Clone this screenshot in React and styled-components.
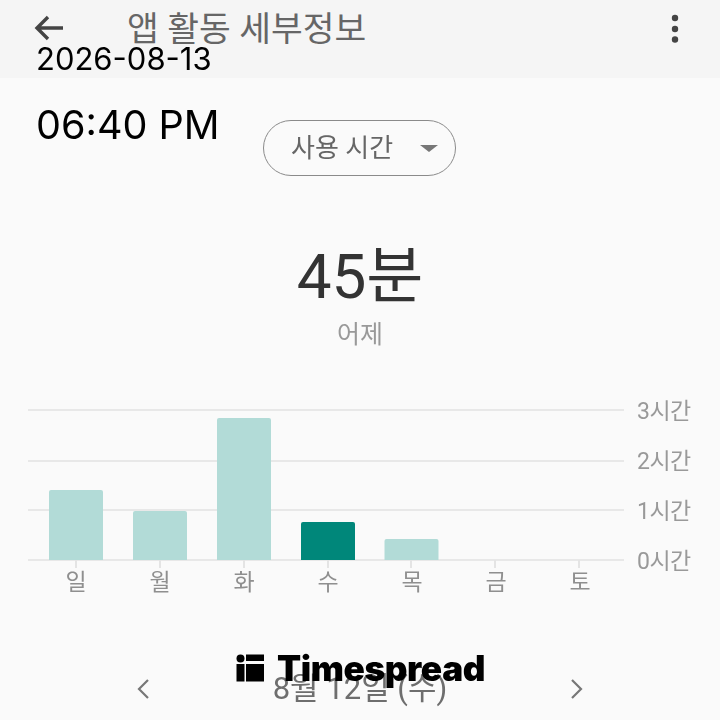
import styled, { createGlobalStyle } from "styled-components";

const GlobalStyle = createGlobalStyle`
  html, body {
    margin: 0;
    padding: 0;
    width: 720px;
    height: 720px;
    overflow: hidden;
    background: #fafafa;
  }
`;

const Page = styled.div`
  position: relative;
  width: 720px;
  height: 720px;
  overflow: hidden;
  background: #fafafa;
  font-family: Roboto, "Noto Sans CJK KR", sans-serif;
`;
const Blurred = styled.div`
  display: flex;
  flex-direction: column;
  height: 100%;
  filter: blur(0.6px);
`;
const Header = styled.header`
  display: flex;
  align-items: flex-start;
  height: 78px;
  flex-shrink: 0;
  padding: 8px 40px 0 34px;
  box-sizing: border-box;
  background: #f5f5f5;
`;
const Title = styled.h1`
  flex: 1;
  margin: 1px 0 0 63px;
  font-size: 34.5px;
  line-height: 40px;
  font-weight: 400;
  color: #666;
`;
const HeaderIcon = styled.svg`
  display: block;
  margin-top: 5px;
`;
const FilterRow = styled.div`
  display: flex;
  padding: 42px 0 0 263px;
`;
const Filter = styled.div`
  display: flex;
  align-items: center;
  justify-content: space-between;
  width: 193px;
  height: 56px;
  padding: 0 17px 0 27px;
  box-sizing: border-box;
  border: 1.5px solid #8a8a8a;
  border-radius: 28px;
  font-size: 26px;
  color: #666;
`;
const FilterLabel = styled.span`
  margin-top: -5px;
`;
const Caret = styled.span`
  width: 0;
  height: 0;
  border-left: 9px solid transparent;
  border-right: 9px solid transparent;
  border-top: 7px solid #777;
`;
const Summary = styled.section`
  display: flex;
  flex-direction: column;
  align-items: center;
  margin-top: 61px;
`;
const Total = styled.div`
  font-size: 62px;
  line-height: 80px;
  color: #333;
`;
const Caption = styled.div`
  font-size: 25px;
  line-height: 36px;
  color: #999;
`;
const Chart = styled.section`
  display: flex;
  flex-direction: column;
  margin-top: 56px;
  padding-left: 28px;
`;
const Plot = styled.div`
  display: flex;
  gap: 13px;
`;
const Canvas = styled.svg`
  display: block;
  flex-shrink: 0;
`;
const YAxis = styled.div`
  display: flex;
  flex-direction: column;
  justify-content: space-between;
  height: 180px;
  margin-top: -12px;
`;
const YLabel = styled.span`
  font-size: 23px;
  line-height: 30px;
  letter-spacing: -0.5px;
  color: #999;
`;
const Days = styled.div`
  display: grid;
  grid-template-columns: repeat(7, 84px);
  margin-top: -9px;
  padding-left: 6px;
`;
const Day = styled.span`
  text-align: center;
  font-size: 23px;
  line-height: 30px;
  color: #8f8f8f;
`;
const DateNav = styled.nav`
  display: flex;
  align-items: center;
  justify-content: space-between;
  margin-top: 71px;
  padding: 0 136px;
`;
const DateText = styled.span`
  font-size: 31px;
  line-height: 40px;
  color: #6e6e6e;
`;
const Clock = styled.div`
  position: absolute;
  top: 40px;
  left: 36px;
  color: #000;
  font-family: Inter, sans-serif;
`;
const ClockDate = styled.div`
  font-size: 31px;
  line-height: 38px;
`;
const ClockTime = styled.div`
  margin-top: 23px;
  font-size: 39.6px;
  line-height: 48px;
`;
const Watermark = styled.div`
  position: absolute;
  top: 646px;
  left: 236px;
  display: flex;
  align-items: center;
  gap: 13px;
  font-family: Inter, sans-serif;
  font-size: 35.2px;
  font-weight: 900;
  line-height: 44px;
  letter-spacing: -0.4px;
  color: #000;
`;

const gridLines = [1, 52, 101, 151];
const bars = [
  { x: 21, top: 81, active: false },
  { x: 105, top: 102, active: false },
  { x: 189, top: 9, active: false },
  { x: 273, top: 113, active: true },
  { x: 356.5, top: 130, active: false },
];
const tickCenters = [48, 132, 216, 300, 383, 467, 551];
const days = ["일", "월", "화", "수", "목", "금", "토"];
const hours = ["3시간", "2시간", "1시간", "0시간"];

const App = () => (
  <Page>
    <GlobalStyle />
    <Blurred>
      <Header>
        <HeaderIcon width="30" height="30" viewBox="0 0 30 30" fill="none" stroke="#444" strokeWidth="3.4">
          <path d="M29 15H3M14 4 3 15l11 11" />
        </HeaderIcon>
        <Title>앱 활동 세부정보</Title>
        <HeaderIcon width="10" height="32" viewBox="0 0 10 32" fill="#444">
          <circle cx="5" cy="5" r="3.2" />
          <circle cx="5" cy="16" r="3.2" />
          <circle cx="5" cy="26.5" r="3.2" />
        </HeaderIcon>
      </Header>
      <FilterRow>
        <Filter>
          <FilterLabel>사용 시간</FilterLabel>
          <Caret />
        </Filter>
      </FilterRow>
      <Summary>
        <Total>45분</Total>
        <Caption>어제</Caption>
      </Summary>
      <Chart>
        <Plot>
          <Canvas width="596" height="160" viewBox="0 0 596 160">
            {gridLines.map((y) => (
              <line key={y} x1="0" x2="596" y1={y} y2={y} stroke="#e8e8e8" strokeWidth="2" />
            ))}
            {tickCenters.map((x) => (
              <line key={x} x1={x} x2={x} y1="151" y2="159" stroke="#e4e4e4" strokeWidth="2" />
            ))}
            {bars.map((bar) => (
              <path
                key={bar.x}
                d={`M${bar.x} 151V${bar.top + 2}q0-2 2-2h50q2 0 2 2V151z`}
                fill={bar.active ? "#00877a" : "#b2dbd7"}
              />
            ))}
          </Canvas>
          <YAxis>
            {hours.map((h) => (
              <YLabel key={h}>{h}</YLabel>
            ))}
          </YAxis>
        </Plot>
        <Days>
          {days.map((d) => (
            <Day key={d}>{d}</Day>
          ))}
        </Days>
      </Chart>
      <DateNav>
        <svg width="14" height="22" viewBox="0 0 14 22" fill="none" stroke="#777" strokeWidth="2.2">
          <path d="M12 2 3 11l9 9" />
        </svg>
        <DateText>8월 12일 (수)</DateText>
        <svg width="14" height="22" viewBox="0 0 14 22" fill="none" stroke="#777" strokeWidth="2.2">
          <path d="M2 2l9 9-9 9" />
        </svg>
      </DateNav>
    </Blurred>
    <Clock>
      <ClockDate>2026-08-13</ClockDate>
      <ClockTime>06:40 PM</ClockTime>
    </Clock>
    <Watermark>
      <svg width="28" height="28" viewBox="0 0 28 28" fill="#000">
        <circle cx="4.5" cy="4.5" r="4" />
        <rect x="0.5" y="10" width="8" height="17.5" />
        <rect x="10" y="0.5" width="18" height="6.5" />
        <rect x="10" y="10" width="18" height="17.5" />
      </svg>
      Timespread
    </Watermark>
  </Page>
);

export default App;
